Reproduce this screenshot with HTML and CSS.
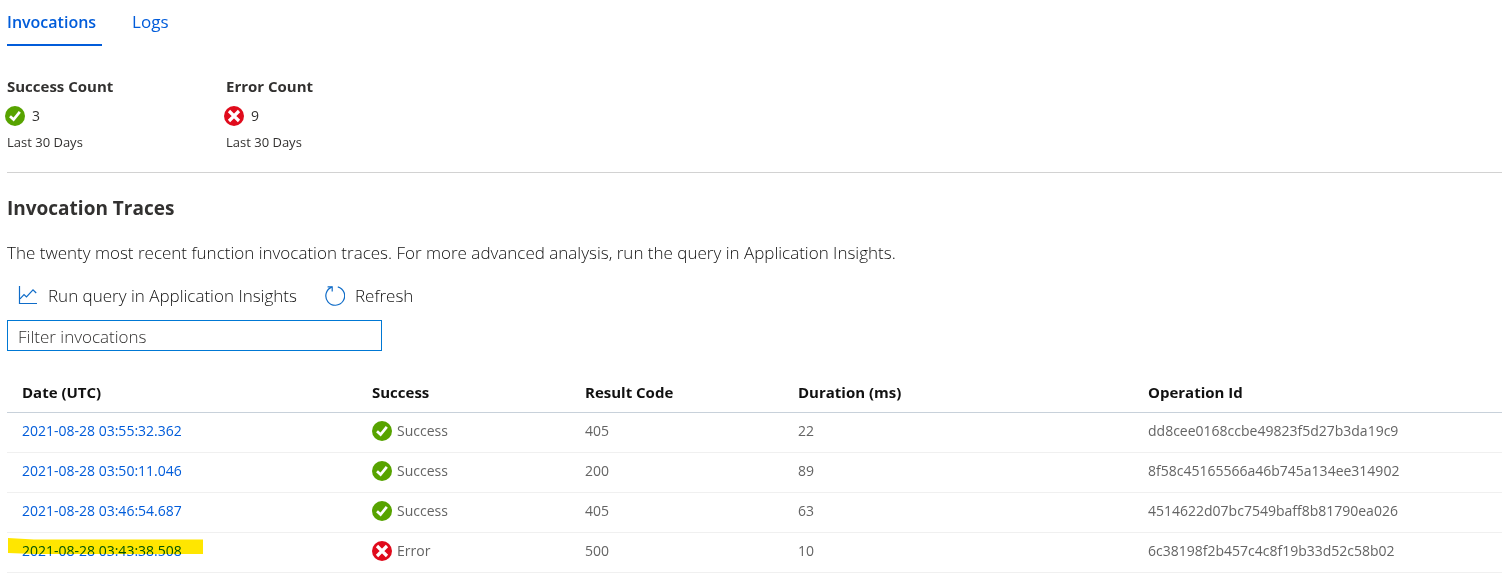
FILE: index.html
```html
<!DOCTYPE html>
<html lang="en">

<head>
    <meta charset="UTF-8">
    <meta name="viewport" content="width=device-width, initial-scale=1.0">
    <title>Invocations</title>
    <link rel="stylesheet" href="styles.css">
</head>

<body>
    <svg class="sprite" aria-hidden="true">
        <symbol id="icon-success" viewBox="0 0 20 20">
            <circle cx="10" cy="10" r="10" fill="#57a300" />
            <path d="M5 10.2l3.6 3.4 6.2-7.8" fill="none" stroke="#fff" stroke-width="2.7" />
        </symbol>
        <symbol id="icon-error" viewBox="0 0 20 20">
            <circle cx="10" cy="10" r="10" fill="#e00b1c" />
            <path d="M5 5l10 10M15 5l-10 10" fill="none" stroke="#fff" stroke-width="3.2" />
        </symbol>
    </svg>

    <nav class="tabs">
        <a href="#invocations" class="tab active">Invocations</a>
        <a href="#logs" class="tab">Logs</a>
    </nav>

    <div class="counts">
        <div class="count">
            <h3>Success Count</h3>
            <div class="count-value"><svg class="icon"><use href="#icon-success" /></svg>3</div>
            <div class="count-period">Last 30 Days</div>
        </div>
        <div class="count">
            <h3>Error Count</h3>
            <div class="count-value"><svg class="icon"><use href="#icon-error" /></svg>9</div>
            <div class="count-period">Last 30 Days</div>
        </div>
    </div>

    <main class="traces">
        <h2>Invocation Traces</h2>
        <p>The twenty most recent function invocation traces. For more advanced analysis, run the query in Application Insights.</p>

        <div class="commands">
            <button type="button">
                <svg class="icon" viewBox="0 0 20 20" fill="none" stroke="#0f6cc8">
                    <path d="M1.5 0v17.5H19" stroke-width="1.2" />
                    <path d="M2 12.8l4-4.3 2.5 2.5 6.5-7.2 3.2 3.2" stroke-width="1.2" />
                </svg>
                Run query in Application Insights
            </button>
            <button type="button">
                <svg class="icon" viewBox="0 0 20 20" fill="none" stroke="#0f6cc8" stroke-width="1.2">
                    <path d="M12.8 .8A9.4 9.4 0 1 1 6.8 1.1" />
                    <path d="M2.6 .8h4.6v4.6" />
                </svg>
                Refresh
            </button>
        </div>

        <input type="text" class="filter" placeholder="Filter invocations" aria-label="Filter invocations">

        <table>
            <thead>
                <tr>
                    <th class="col-wide">Date (UTC)</th>
                    <th class="col-narrow">Success</th>
                    <th class="col-narrow">Result Code</th>
                    <th class="col-wide">Duration (ms)</th>
                    <th>Operation Id</th>
                </tr>
            </thead>
            <tbody>
                <tr>
                    <td><a href="#trace-1">2021-08-28 03:55:32.362</a></td>
                    <td><span class="status"><svg class="icon"><use href="#icon-success" /></svg>Success</span></td>
                    <td>405</td>
                    <td>22</td>
                    <td>dd8cee0168ccbe49823f5d27b3da19c9</td>
                </tr>
                <tr>
                    <td><a href="#trace-2">2021-08-28 03:50:11.046</a></td>
                    <td><span class="status"><svg class="icon"><use href="#icon-success" /></svg>Success</span></td>
                    <td>200</td>
                    <td>89</td>
                    <td>8f58c45165566a46b745a134ee314902</td>
                </tr>
                <tr>
                    <td><a href="#trace-3">2021-08-28 03:46:54.687</a></td>
                    <td><span class="status"><svg class="icon"><use href="#icon-success" /></svg>Success</span></td>
                    <td>405</td>
                    <td>63</td>
                    <td>4514622d07bc7549baff8b81790ea026</td>
                </tr>
                <tr>
                    <td class="marked">
                        <a href="#trace-4">2021-08-28 03:43:38.508</a>
                        <svg class="marker" viewBox="0 0 195 16" aria-hidden="true">
                            <path d="M0 0l26 1.5H195V16H26L0 15z" fill="#ffe600" />
                        </svg>
                    </td>
                    <td><span class="status"><svg class="icon"><use href="#icon-error" /></svg>Error</span></td>
                    <td>500</td>
                    <td>10</td>
                    <td>6c38198f2b457c4c8f19b33d52c58b02</td>
                </tr>
            </tbody>
        </table>
    </main>
</body>

</html>
```

FILE: styles.css
```css
body {
    margin: 0;
    padding-left: 7px;
    font-family: "Open Sans", "Noto Sans", sans-serif;
    font-size: 14px;
    line-height: 20px;
    color: #323130;
    background-color: white;
}

a {
    color: #015cda;
    text-decoration: none;
}

h2,
h3,
p {
    margin: 0;
}

.sprite {
    display: none;
}

.icon {
    width: 20px;
    height: 20px;
    flex: none;
}

.tabs {
    display: flex;
    gap: 30px;
    font-size: 17px;
}

.tab {
    padding: 12px 6px 12px 0;
    border-bottom: 2px solid transparent;
}

.tab.active {
    font-size: 16px;
    font-weight: 600;
    border-bottom-color: #015cda;
}

.counts {
    display: flex;
    padding: 30px 0 20px;
    border-bottom: 1px solid #d2d2d2;
}

.count {
    width: 219px;
}

.count h3 {
    font-size: 15px;
    font-weight: 700;
}

.count-value {
    display: flex;
    gap: 7px;
    margin: 10px 0 6px -2px;
}

.count-period {
    font-size: 13px;
}

.traces h2 {
    padding-top: 25px;
    font-size: 19px;
    font-weight: 700;
}

.traces p {
    padding: 25px 0 23px;
    font-size: 17px;
    font-weight: 300;
    color: #111;
}

.commands {
    display: flex;
    gap: 28px;
    padding-left: 11px;
}

.commands button {
    display: flex;
    gap: 10px;
    padding: 0;
    border: none;
    background: none;
    font-family: inherit;
    font-size: 17px;
    font-weight: 300;
    line-height: 20px;
    color: #111;
    cursor: pointer;
}

.filter {
    display: block;
    box-sizing: border-box;
    width: 375px;
    height: 31px;
    margin: 14px 0 22px;
    padding: 2px 10px 0;
    border: 1px solid #0078d4;
    font-family: inherit;
    font-size: 17px;
    font-weight: 300;
}

.filter::placeholder {
    color: #323130;
}

table {
    width: 100%;
    table-layout: fixed;
    border-collapse: collapse;
}

th,
td {
    padding: 0 15px;
    text-align: left;
    border-bottom: 1px solid #f0f0f0;
}

th {
    height: 37px;
    padding-bottom: 2px;
    font-size: 15px;
    font-weight: 700;
    color: #111;
    border-bottom-color: #c8d1da;
}

td {
    height: 35px;
    padding-bottom: 4px;
    color: #646464;
}

.col-wide {
    width: 320px;
}

.col-narrow {
    width: 183px;
}

.status {
    display: flex;
    gap: 5px;
}

.marked {
    position: relative;
}

/* highlighter stroke over the date */
.marker {
    position: absolute;
    left: 1px;
    top: 5px;
    width: 195px;
    height: 16px;
    mix-blend-mode: multiply;
    pointer-events: none;
}
```
